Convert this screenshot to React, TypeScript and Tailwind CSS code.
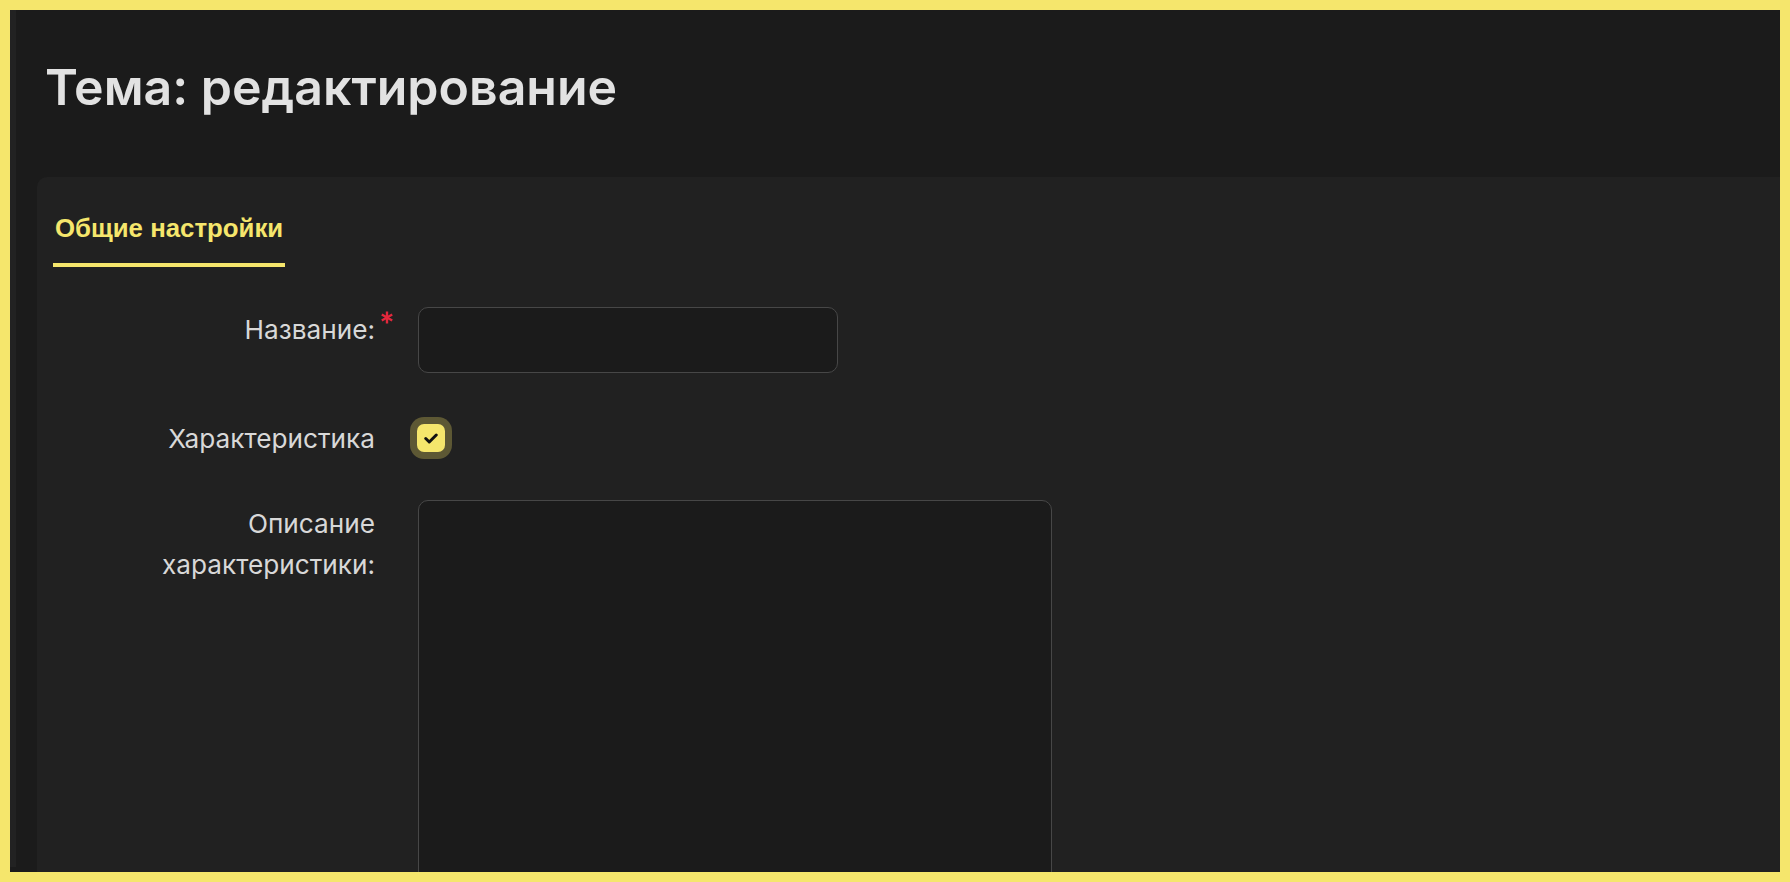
import React from "react";

const Asterisk = () => (
  <svg viewBox="0 0 12 13" className="absolute -right-[18px] -top-[3px] w-[12px] h-[13px]">
    <g stroke="#e3283c" strokeWidth="2.4" strokeLinecap="butt">
      <line x1="6" y1="0.5" x2="6" y2="12.5" />
      <line x1="0.8" y1="3.5" x2="11.2" y2="9.5" />
      <line x1="0.8" y1="9.5" x2="11.2" y2="3.5" />
    </g>
  </svg>
);

const Check = () => (
  <svg viewBox="0 0 16 12" className="w-[14px] h-[11px]">
    <polyline points="2,6 6,10 14,2" fill="none" stroke="#111" strokeWidth="3.4" strokeLinecap="round" strokeLinejoin="round" />
  </svg>
);

export default function App() {
  return (
    <div className="w-full h-screen overflow-hidden border-[10px] border-[#f5e66c] bg-[#1b1b1b] flex font-['Inter',sans-serif]">
      <div className="w-[6px] mb-[5px] bg-[#222222]" />
      <div className="flex-1 flex flex-col min-w-0 pl-[21px]">
        <h1 className="pt-[47px] pl-[8px] text-[50px] leading-[60px] font-semibold text-[#e2e2e2]">
          Тема: редактирование
        </h1>

        <section className="mt-[60px] flex-1 bg-[#212121] rounded-tl-[10px] pl-[16px] overflow-hidden">
          <div className="pt-[37px] flex">
            <div className="px-[2px] pb-[20px] border-b-[4px] border-[#f5e66c] font-['Liberation_Sans',sans-serif] font-bold text-[25.8px] leading-[28.6px] text-[#f5e66c]">
              Общие настройки
            </div>
          </div>

          <div className="mt-[40px] flex flex-col text-[26.2px] leading-[41px] text-[#d8d8d8]">
            <div className="flex items-start">
              <div className="w-[322px] pt-[2px] text-right">
                <span className="relative">
                  Название:
                  <Asterisk />
                </span>
              </div>
              <input
                type="text"
                className="ml-[43px] w-[420px] h-[66px] rounded-[10px] border-[1.5px] border-[#474747] bg-[#1b1b1b] outline-none"
              />
            </div>

            <div className="flex items-center mt-[45px]">
              <div className="w-[322px] text-right">Характеристика</div>
              <div className="ml-[42px] w-[28px] h-[28px] rounded-[7px] bg-[#f5e66c] ring-[7px] ring-[#5d5834] flex items-center justify-center">
                <Check />
              </div>
            </div>

            <div className="flex items-start mt-[41px]">
              <div className="w-[322px] pt-[3px] text-right">
                Описание
                <br />
                характеристики:
              </div>
              <textarea className="ml-[43px] w-[634px] h-[420px] rounded-[10px] border-[1.5px] border-[#474747] bg-[#1b1b1b] outline-none resize-none" />
            </div>
          </div>
        </section>
      </div>
    </div>
  );
}
